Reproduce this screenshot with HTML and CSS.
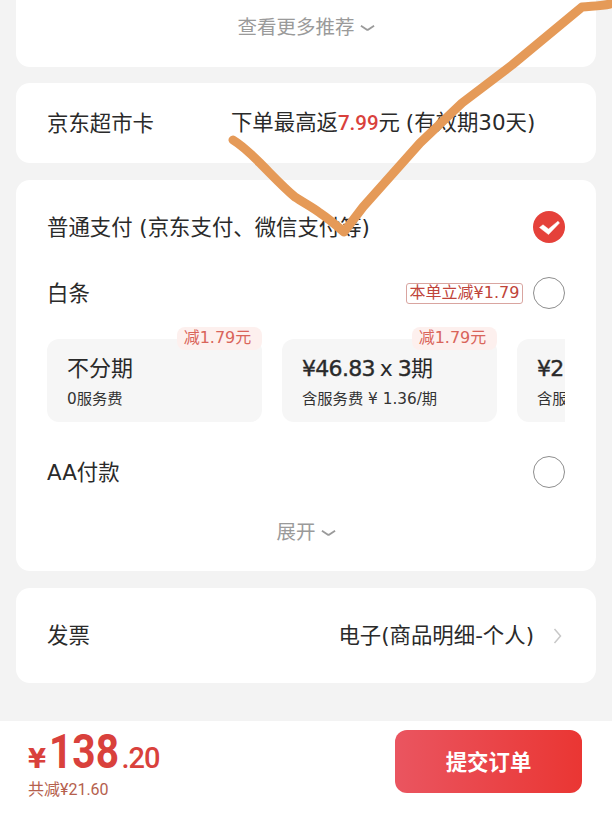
FILE: index.html
```html
<!DOCTYPE html>
<html lang="zh-CN">
<head>
  <meta charset="UTF-8" />
  <meta name="viewport" content="width=device-width, initial-scale=1.0" />
  <title>确认订单</title>
  <link rel="stylesheet" href="styles.css">
</head>
<body>
  <div class="page">
    <section class="card card-more">
      <span class="more-link">查看更多推荐
        <svg class="chev-down" viewBox="0 0 16 8"><path d="M1 1.5L7 5.5Q8 6.2 9 5.5L15 1.5"/></svg>
      </span>
    </section>

    <section class="card card-row card-market">
      <span class="row-label">京东超市卡</span>
      <span class="market-text">下单最高返<em>7.99</em>元 (有效期30天)</span>
    </section>

    <section class="card card-pay">
      <div class="pay-row">
        <span class="row-label">普通支付 (京东支付、微信支付等)</span>
        <svg class="radio-on" viewBox="0 0 32 32">
          <circle cx="16" cy="16" r="16"/>
          <path d="M6.5 16.5L10 13.8L15.5 18L25 10.2L26.5 12L15.5 23.5Z"/>
        </svg>
      </div>
      <div class="pay-row">
        <span class="row-label">白条</span>
        <span class="row-end">
          <span class="promo-tag">本单立减¥1.79</span>
          <span class="radio"></span>
        </span>
      </div>
      <div class="plans">
        <div class="plan">
          <span class="plan-badge">减1.79元</span>
          <div class="plan-title">不分期</div>
          <div class="plan-sub">0服务费</div>
        </div>
        <div class="plan">
          <span class="plan-badge">减1.79元</span>
          <div class="plan-title"><span class="plan-amount">¥46.83</span> x <span class="plan-amount">3</span>期</div>
          <div class="plan-sub">含服务费 ¥ 1.36/期</div>
        </div>
        <div class="plan">
          <div class="plan-title"><span class="plan-amount">¥2</span></div>
          <div class="plan-sub">含服</div>
        </div>
      </div>
      <div class="pay-row">
        <span class="row-label">AA付款</span>
        <span class="radio"></span>
      </div>
      <div class="expand">展开
        <svg class="chev-down" viewBox="0 0 16 8"><path d="M1 1.5L7 5.5Q8 6.2 9 5.5L15 1.5"/></svg>
      </div>
    </section>

    <section class="card card-row card-invoice">
      <span class="row-label">发票</span>
      <span class="invoice-value">电子(商品明细-个人)
        <svg class="chev-right" viewBox="0 0 9 16"><path d="M1.5 1l6 7-6 7"/></svg>
      </span>
    </section>

    <footer class="bottom-bar">
      <div class="total">
        <div class="price"><span class="price-yen">¥</span><span class="price-int">138</span><span class="price-dec">.20</span></div>
        <div class="saved">共减¥21.60</div>
      </div>
      <button class="submit" type="button"><span class="submit-text">提交订单</span></button>
    </footer>

    <!-- hand drawn tick on top of the screenshot -->
    <svg class="scribble" viewBox="0 0 612 813">
      <path d="M233 140C243 146 251 154 260 163C272 175 283 187 295 197C304 203 312 207 320 213C329 219 337 226 344 232L363 207L420 143L462 103L512 65L582 7C592 6 601 6 610 4"/>
    </svg>
  </div>
</body>
</html>
```

FILE: styles.css
```css
* {
  box-sizing: border-box;
}
body {
  margin: 0;
  font-family: "DejaVu Sans", "Noto Sans CJK SC", sans-serif;
  background: #f3f3f3;
  color: #2a2a2a;
}
.page {
  position: relative;
  height: 813px;
  overflow: hidden;
  display: flex;
  flex-direction: column;
}
.card {
  flex: none;
  margin: 0 16px 17px;
  background: #fff;
  border-radius: 14px;
}
.card-more {
  height: 67px;
  margin-bottom: 16px;
  border-radius: 0 0 14px 14px;
  padding-top: 13px;
  text-align: center;
  font-size: 19.5px;
  line-height: 30px;
  color: #9a9a9a;
}
.more-link {
  display: inline-flex;
  align-items: center;
  gap: 5px;
}
.chev-down {
  width: 15px;
  height: 8px;
  fill: none;
  stroke: #9a9a9a;
  stroke-width: 2;
}
.card-row {
  display: flex;
  align-items: center;
  padding: 0 31px;
}
.row-label {
  font-size: 21.4px;
  line-height: 30px;
  padding-top: 1px;
}
.card-market {
  height: 80px;
}
.market-text {
  margin-left: 77px;
  font-size: 21.4px;
  line-height: 30px;
  word-spacing: -1px;
  white-space: nowrap;
}
.market-text em {
  font-style: normal;
  font-size: 20.5px;
  color: #d9413c;
  font-family: Roboto, sans-serif;
  font-weight: 500;
}
.card-pay {
  height: 391px;
  padding: 31px 31px 0;
}
.pay-row {
  display: flex;
  align-items: center;
  justify-content: space-between;
  height: 32px;
  margin-bottom: 34px;
}
.row-end {
  display: flex;
  align-items: center;
  gap: 10px;
}
.radio-on {
  width: 32px;
  height: 32px;
}
.radio-on circle {
  fill: #e5413a;
}
.radio-on path {
  fill: #fff;
  stroke: #fff;
  stroke-width: 0.5;
  stroke-linejoin: round;
}
.radio {
  width: 32px;
  height: 32px;
  border: 1.5px solid #8e8e8e;
  border-radius: 50%;
}
.promo-tag {
  width: 117px;
  height: 21px;
  border: 1px solid #d9a5a0;
  border-radius: 3px;
  font-size: 16px;
  line-height: 18px;
  text-align: center;
  white-space: nowrap;
  color: #c0443a;
}
.pay-row:nth-child(2) {
  margin-bottom: 18px;
}
.plans {
  display: flex;
  gap: 20px;
  height: 95px;
  margin-bottom: 34px;
  padding-top: 12px;
  overflow: hidden;
}
.plan {
  position: relative;
  flex: none;
  width: 215px;
  height: 83px;
  padding: 14px 20px 0;
  background: #f6f6f6;
  border-radius: 12px;
}
.plan-badge {
  position: absolute;
  top: -12px;
  right: 0;
  width: 85px;
  height: 23px;
  padding-right: 4px;
  background: #fdf0ee;
  border-radius: 8px;
  font-size: 16px;
  line-height: 22px;
  text-align: center;
  white-space: nowrap;
  color: #d9645a;
}
.plan-title {
  font-size: 22px;
  line-height: 32px;
  word-spacing: -2px;
  white-space: nowrap;
}
.plan-amount {
  letter-spacing: -0.7px;
  -webkit-text-stroke: 0.4px #2a2a2a;
}
.plan-sub {
  font-size: 15.3px;
  line-height: 22px;
  margin-top: 3px;
  color: #333;
  white-space: nowrap;
}
.expand {
  display: flex;
  justify-content: center;
  align-items: center;
  gap: 5px;
  margin-top: -3px;
  font-size: 19.5px;
  line-height: 28px;
  color: #9a9a9a;
}
.card-invoice {
  height: 95px;
  justify-content: space-between;
}
.invoice-value {
  display: inline-flex;
  align-items: center;
  gap: 19px;
  font-size: 21.4px;
  line-height: 30px;
  margin-right: 3px;
}
.chev-right {
  width: 9px;
  height: 16px;
  fill: none;
  stroke: #c8c8c8;
  stroke-width: 1.5;
}
.bottom-bar {
  position: absolute;
  left: 0;
  right: 0;
  bottom: 0;
  height: 92px;
  display: flex;
  justify-content: space-between;
  padding: 9px 30px 0 28px;
  background: #fff;
}
.total {
  color: #d9413c;
}
.price {
  display: flex;
  align-items: baseline;
  height: 44px;
  line-height: 44px;
  font-family: Roboto, sans-serif;
  font-weight: 700;
}
.price-yen {
  font-family: "DejaVu Sans", sans-serif;
  font-size: 26px;
  margin-right: 3px;
}
/* the original digits are condensed, no installed font has that width */
.price-int {
  display: inline-block;
  font-size: 49px;
  margin-right: -14px;
  transform: scaleX(0.83);
  transform-origin: left;
}
.price-dec {
  margin-left: 2px;
  font-size: 29px;
  font-weight: 500;
  letter-spacing: -1px;
}
.saved {
  margin-top: 5px;
  font-family: Roboto, "Noto Sans CJK SC", sans-serif;
  font-size: 16px;
  line-height: 22px;
  color: #b5604d;
}
.submit {
  width: 187px;
  height: 63px;
  padding: 0 0 3px;
  border: none;
  border-radius: 12px;
  background: linear-gradient(90deg, #ea5560, #ea3633);
  color: #fff;
  font-family: inherit;
  font-size: 21.4px;
  font-weight: 700;
}
.scribble {
  position: absolute;
  left: 0;
  top: 0;
  width: 612px;
  height: 813px;
  pointer-events: none;
}
.scribble path {
  fill: none;
  stroke: #e59a58;
  stroke-width: 9;
  stroke-linecap: round;
  stroke-linejoin: round;
}
```
